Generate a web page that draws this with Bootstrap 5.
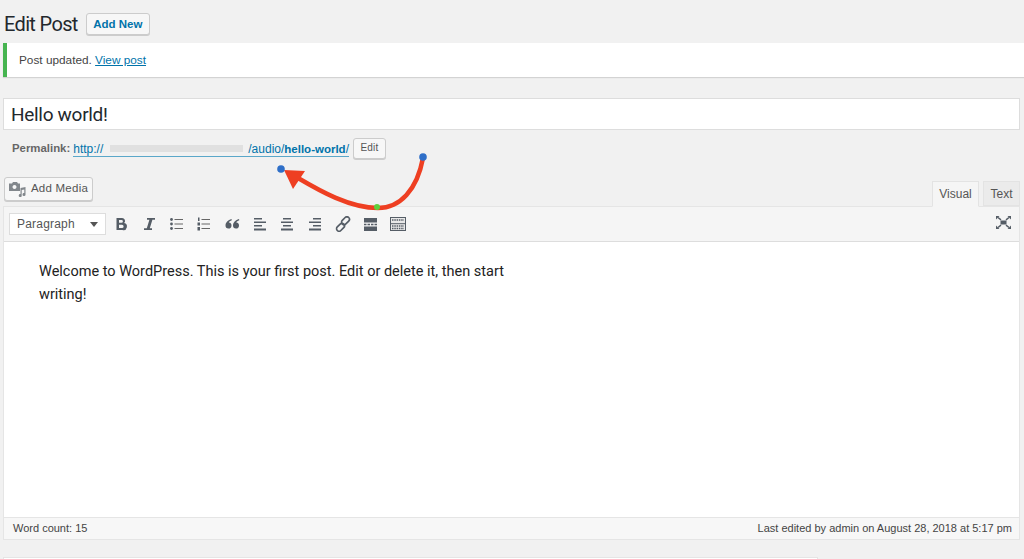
<!DOCTYPE html>
<html lang="en">
<head>
<meta charset="utf-8">
<title>Edit Post</title>
<link href="https://cdn.jsdelivr.net/npm/bootstrap@5.3.0/dist/css/bootstrap.min.css" rel="stylesheet">
<style>
html,body{height:559px;overflow:hidden}
body{background:#f1f1f1;color:#444;font-family:"Liberation Sans",Arial,sans-serif;font-size:13px;position:relative}
.wp-page{padding-left:3px;padding-right:4px}
.head-row{height:43px;padding-top:5px;gap:8px}
.head-title{font-family:Roboto,"Liberation Sans",sans-serif;font-size:20px;font-weight:400;color:#23282d;margin:0 0 0 1px;line-height:34px;letter-spacing:-.65px}
.wp-btn{background:#f7f7f7;border:1px solid #ccc;border-radius:3px;box-shadow:0 1px 0 #ccc;color:#555;padding:0;display:inline-flex;align-items:center;justify-content:center;line-height:1}
.add-new{width:64px;height:22px;color:#0073aa;font-weight:700;font-size:11.5px;padding-top:1px}
.notice-bar{height:34px;background:#fff;border-left:4px solid #46b450;box-shadow:0 1px 1px rgba(0,0,0,.12);margin-right:-4px;padding-left:12px;padding-top:2px;font-size:11.8px}
.notice-bar a,.perma a{color:#0073aa}
.title-box{height:32px;margin-top:21px;background:#fff;border:1px solid #ddd;padding-left:7px;font-family:Roboto,"Liberation Sans",sans-serif;font-size:19px;letter-spacing:-.3px;color:#23282d;line-height:31px}
.perma{height:36px;padding-left:9px;font-size:11.4px;color:#666;gap:3px}
.perma b{color:#666;padding-top:1px}
.perma-link{display:inline-flex;align-items:center;color:#0073aa;border-bottom:1px solid #5aa7c9;height:15px;line-height:14px;text-decoration:none;font-size:12px;margin-top:2px}
.perma-link b{color:#0073aa;font-size:11.5px;padding-top:0}
.blurred{width:133px;height:7px;background:#e0e0e0;margin:0 5px 0 7px;display:inline-block}
.perm-edit{width:33px;height:21px;font-size:10px;color:#555;margin-left:1px;letter-spacing:.2px}
.tool-row{height:40px;align-items:flex-start;justify-content:space-between}
.media-btn{width:89px;height:24px;font-size:11.5px;margin-top:11px;margin-left:1px;gap:5px;letter-spacing:.25px}
.tabs-wrap{display:flex;align-self:flex-end;gap:4px}
.wp-tab{height:25px;font-size:12px;color:#555;border:1px solid #e3e3e3;display:flex;align-items:center;justify-content:center}
.tab-on{width:47px;background:#f5f5f5;border-bottom-color:#f5f5f5;margin-bottom:-1px;height:26px;position:relative;z-index:1}
.tab-off{width:37px;background:#ebebeb}
.editor-box{height:334px;border:1px solid #e5e5e5;background:#fff;display:flex;flex-direction:column}
.tool-strip{height:35px;background:#f5f5f5;border-bottom:1px solid #ddd;padding-left:5px;padding-right:8px}
.para-sel{width:97px;height:22px;background:#fff;border:1px solid #ddd;font-size:12px;color:#555;padding:0 7px;letter-spacing:.2px}
.para-arrow{width:0;height:0;border-left:4px solid transparent;border-right:4px solid transparent;border-top:5px solid #555}
.ic-row{gap:0;margin-left:1.500px}
.ic-cell{width:27.7px;height:20px;display:flex;align-items:center;justify-content:center}
.fs-ic{margin-bottom:4px}
.editor-body{flex:1;padding:18px 0 0 35px;font-family:Roboto,"Liberation Sans",sans-serif;font-size:14.5px;line-height:23px;color:#222;width:520px}
.status-strip{height:22px;background:#f7f7f7;border-top:1px solid #e5e5e5;font-size:11px;color:#444;padding:0 7px 0 9px}
.next-box{position:absolute;left:3px;top:557px;width:815px;height:10px;background:#fff;border:1px solid #e5e5e5}
.overlay{position:absolute;left:0;top:0;pointer-events:none}
</style>
</head>
<body>
<div class="wp-page">
  <div class="head-row d-flex align-items-center">
    <h1 class="head-title">Edit Post</h1>
    <a class="wp-btn add-new text-decoration-none" href="#">Add New</a>
  </div>
  <div class="notice-bar d-flex align-items-center"><span>Post updated.&nbsp;<a href="#">View post</a></span></div>
  <div class="title-box">Hello world!</div>
  <div class="perma d-flex align-items-center">
    <b>Permalink:</b>
    <a class="perma-link" href="#">http://<span class="blurred"></span>/audio/<b>hello-world</b>/</a>
    <button class="wp-btn perm-edit" type="button">Edit</button>
  </div>
  <div class="tool-row d-flex">
    <button class="wp-btn media-btn" type="button">
      <svg width="17" height="15" viewBox="0 0 17 15" fill="#82878c"><path fill-rule="evenodd" d="M0 1.500h3L4 0h4l1 1.500h2V9H0zM5.500 3a2 2 0 1 0 .01 0z"/><path d="M11.500 6l5-1v7.500a1.500 1.500 0 1 1-1.200-1.400V7.500l-2.600.5v5.500a1.500 1.500 0 1 1-1.200-1.400z"/></svg>
      <span>Add Media</span>
    </button>
    <div class="tabs-wrap"><div class="wp-tab tab-on">Visual</div><div class="wp-tab tab-off">Text</div></div>
  </div>
  <div class="editor-box">
    <div class="tool-strip d-flex align-items-center justify-content-between">
      <div class="d-flex align-items-center">
        <div class="para-sel d-flex align-items-center justify-content-between"><span>Paragraph</span><span class="para-arrow"></span></div>
        <div class="ic-row d-flex">
          <div class="ic-cell"><svg width="14" height="14" viewBox="0 0 14 14" fill="#555d66"><path fill-rule="evenodd" d="M2.500 1H8a3 3 0 0 1 2.200 5.100A3.400 3.400 0 0 1 8.500 13h-6zM5 3v2.800h2.500a1.400 1.400 0 0 0 0-2.800zM5 7.800V11h3a1.600 1.600 0 0 0 0-3.200z"/></svg></div>
          <div class="ic-cell"><svg width="14" height="14" viewBox="0 0 14 14" fill="#555d66"><path d="M5 1h8v1.800h-2.600L7.800 11.200H10V13H2v-1.800h2.800L7.400 2.800H5z"/></svg></div>
          <div class="ic-cell"><svg width="14" height="14" viewBox="0 0 14 14"><g fill="#555d66"><circle cx="1.500" cy="2.500" r="1.400"/><circle cx="1.500" cy="7" r="1.400"/><circle cx="1.500" cy="11.500" r="1.400"/></g><g stroke="#666" stroke-width="1.200"><path d="M4.500 2.500H13M4.500 7H13M4.500 11.500H13"/></g></svg></div>
          <div class="ic-cell"><svg width="14" height="14" viewBox="0 0 14 14"><g fill="#555d66"><rect x="1" y="0.500" width="1.500" height="3.500"/><rect x="0.500" y="5.500" width="2.500" height="3"/><rect x="0.500" y="10" width="2.500" height="3.500"/></g><g stroke="#666" stroke-width="1.200"><path d="M4.500 2.500H13M4.500 7H13M4.500 11.500H13"/></g></svg></div>
          <div class="ic-cell"><svg width="15" height="12" viewBox="0 0 15 12" fill="#555d66"><path d="M6.500 1C3 2 .5 4.500.5 7.500a3 3 0 1 0 3.300-3C4.200 3.500 5.200 2.800 6.800 2.300zM14 1c-3.500 1-6 3.500-6 6.500a3 3 0 1 0 3.300-3c.4-1 1.400-1.700 3-2.200z"/></svg></div>
          <div class="ic-cell"><svg width="14" height="13" viewBox="0 0 14 13" fill="#555d66"><path d="M1 0h8v1.500H1zM1 3.500h12V5H1zM1 7h8v1.500H1zM1 10.500h12V12.500H1z"/></svg></div>
          <div class="ic-cell"><svg width="14" height="13" viewBox="0 0 14 13" fill="#555d66"><path d="M3 0h8v1.500H3zM1 3.500h12V5H1zM3 7h8v1.500H3zM1 10.500h12V12.500H1z"/></svg></div>
          <div class="ic-cell"><svg width="14" height="13" viewBox="0 0 14 13" fill="#555d66"><path d="M5 0h8v1.500H5zM1 3.500h12V5H1zM5 7h8v1.500H5zM1 10.500h12V12.500H1z"/></svg></div>
          <div class="ic-cell"><svg width="16" height="16" viewBox="0 0 16 16" fill="none" stroke="#555d66" stroke-width="1.700"><rect x="8" y="0.200" width="5" height="9" rx="2.500" transform="rotate(45 10.500 4.700)"/><rect x="3" y="6.800" width="5" height="9" rx="2.500" transform="rotate(45 5.500 11.300)"/></svg></div>
          <div class="ic-cell"><svg width="13" height="13" viewBox="0 0 13 13" fill="#555d66"><path d="M0 0h13v4.500H0zM0 5.800h2.500v1.400H0zM3.500 5.800h2.500v1.400H3.500zM7 5.800h2.500v1.400H7zM10.500 5.800H13v1.400h-2.500zM0 8.500h13V13H0z"/></svg></div>
          <div class="ic-cell"><svg width="16" height="14" viewBox="0 0 16 14" fill="none"><rect x="0.500" y="0.500" width="15" height="13" fill="#e8e8e8" stroke="#555d66"/><path d="M.5 6.700h15" stroke="#555d66"/><path d="M2 3h12M2 9h12M2 11.500h12" stroke="#555d66" stroke-width="1.500" stroke-dasharray="1.500 .8"/></svg></div>
        </div>
      </div>
      <svg class="fs-ic" width="15" height="13" viewBox="0 0 15 13"><rect x="4.500" y="4.500" width="6" height="4" fill="#555d66"/><g stroke="#555d66" stroke-width="1.500" fill="none"><path d="M2 1.500L5 3.800M13 1.500L10 3.800M2 11.500L5 9.200M13 11.500L10 9.200"/></g><g fill="#555d66"><path d="M0 0h3.500L0 3.500zM15 0h-3.500L15 3.500zM0 13h3.500L0 9.500zM15 13h-3.500L15 9.500z"/></g></svg>
    </div>
    <div class="editor-body">Welcome to WordPress. This is your first post. Edit or delete it, then start writing!</div>
    <div class="status-strip d-flex align-items-center justify-content-between"><span>Word count: 15</span><span>Last edited by admin on August 28, 2018 at 5:17 pm</span></div>
  </div>
</div>
<div class="next-box"></div>
<svg class="overlay" width="1024" height="559" viewBox="0 0 1024 559">
  <path d="M423 158C417 190 400 208 378 208C350 208 320 191 298 178" fill="none" stroke="#ee3f22" stroke-width="4.500"/>
  <path d="M284 170L305 171L293 189z" fill="#ee3f22"/>
  <circle cx="423" cy="157" r="3.800" fill="#2f6fc8"/>
  <circle cx="281" cy="169" r="3.800" fill="#2f6fc8"/>
  <circle cx="377" cy="207" r="3" fill="#5fd03c"/>
</svg>
<script src="https://cdn.jsdelivr.net/npm/bootstrap@5.3.0/dist/js/bootstrap.bundle.min.js"></script>
</body>
</html>
